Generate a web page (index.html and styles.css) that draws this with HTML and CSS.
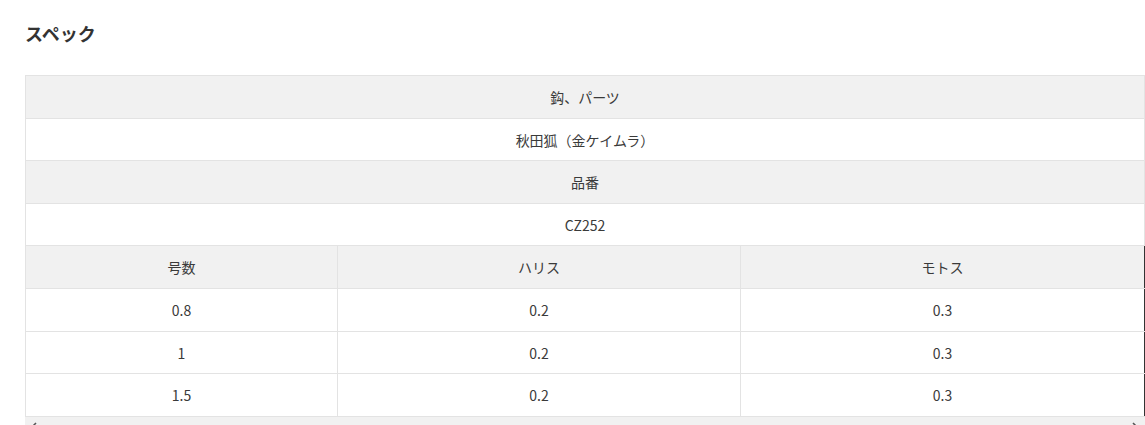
FILE: index.html
```html
<!DOCTYPE html>
<html lang="ja">
<head>
<meta charset="utf-8">
<link rel="stylesheet" href="styles.css">
</head>
<body>
<div class="page">
  <h2 class="title">スペック</h2>
  <div class="scroller">
    <table class="spec">
      <colgroup>
        <col class="c1">
        <col class="c2">
        <col class="c3">
      </colgroup>
      <tr class="gray"><td colspan="3">鈎、パーツ</td></tr>
      <tr><td colspan="3">秋田狐（金ケイムラ）</td></tr>
      <tr class="gray"><td colspan="3">品番</td></tr>
      <tr><td colspan="3">CZ252</td></tr>
      <tr class="gray sub"><td>号数</td><td>ハリス</td><td>モトス</td></tr>
      <tr class="sub"><td>0.8</td><td>0.2</td><td>0.3</td></tr>
      <tr class="sub"><td>1</td><td>0.2</td><td>0.3</td></tr>
      <tr class="sub"><td>1.5</td><td>0.2</td><td>0.3</td></tr>
    </table>
    <div class="hbar">
      <svg class="arrow" width="8" height="10" viewBox="0 0 8 10"><path d="M6 1 L2 5 L6 9" fill="none" stroke="#555" stroke-width="1.6"/></svg>
      <svg class="arrow" width="8" height="10" viewBox="0 0 8 10"><path d="M2 1 L6 5 L2 9" fill="none" stroke="#555" stroke-width="1.6"/></svg>
    </div>
  </div>
</div>
</body>
</html>
```
FILE: styles.css
```css
html, body {
  margin: 0;
  padding: 0;
  background: #fff;
}
body {
  font-family: "Noto Sans CJK JP", "Noto Sans", sans-serif;
  color: #333;
  overflow: hidden;
}
.page {
  padding: 19px 0 0 25px;
}
.title {
  margin: 0;
  font-size: 18px;
  line-height: 28px;
  font-weight: 700;
  color: #333;
}
.scroller {
  margin-top: 28px;
  width: 1120px;
}
.spec {
  width: 1119px;
  border-collapse: collapse;
  table-layout: fixed;
  font-size: 14px;
}
.c1 { width: 312px; }
.c2 { width: 403px; }
.c3 { width: 404px; }
.spec td {
  border: 1px solid #e3e3e3;
  padding: 11px 8px 9px;
  line-height: 21.6px;
  text-align: center;
  color: #3a3a3a;
}
.spec tr.gray td {
  background: #f1f1f1;
}
.spec tr.sub td:last-child {
  border-right: 1px solid #333;
}
.hbar {
  height: 12px;
  background: #f1f1f1;
  display: flex;
  justify-content: space-between;
  align-items: flex-end;
  padding: 0 6px 0 5px;
}
.arrow {
  display: block;
  margin-bottom: -3px;
}
```
